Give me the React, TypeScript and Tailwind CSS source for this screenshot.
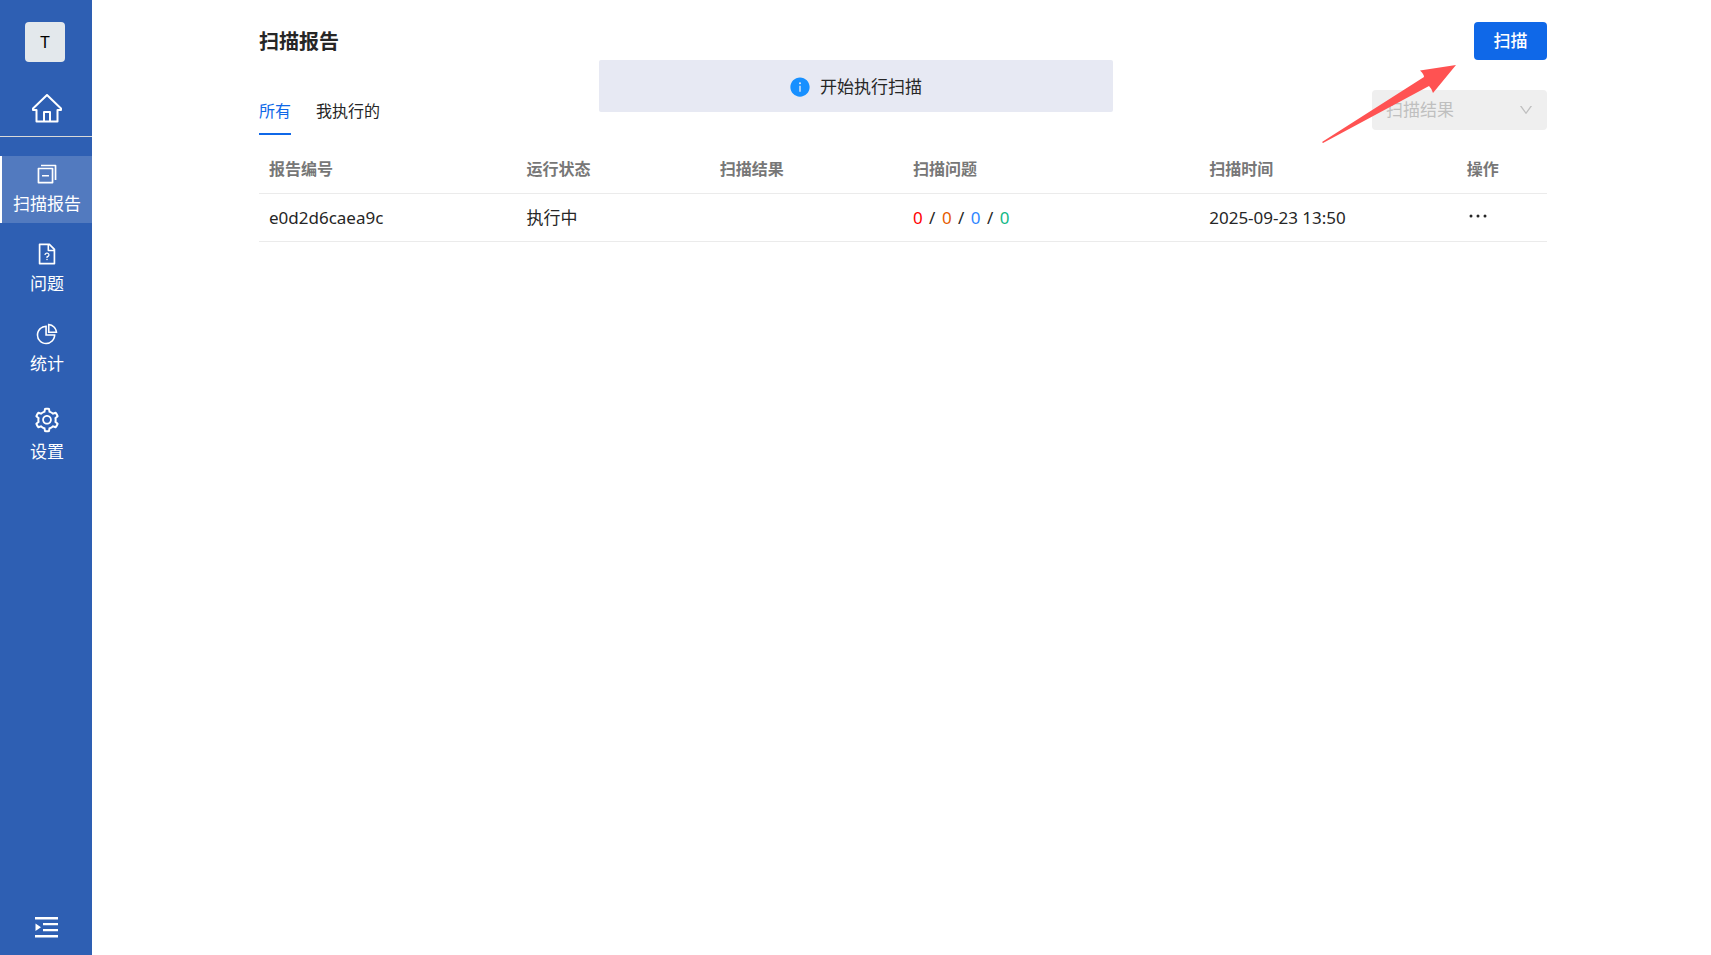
import { AiFillInfoCircle, AiOutlineDown, AiOutlineFileUnknown, AiOutlinePieChart, AiOutlineSetting, AiOutlineSwitcher } from "react-icons/ai";

const reports = [
  { id: "e0d2d6caea9c", status: "执行中", result: "", issues: [0, 0, 0, 0], time: "2025-09-23 13:50" },
];

const columns = [
  { label: "报告编号", width: "w-[20%]" },
  { label: "运行状态", width: "w-[15%]" },
  { label: "扫描结果", width: "w-[15%]" },
  { label: "扫描问题", width: "w-[23%]" },
  { label: "扫描时间", width: "w-[20%]" },
  { label: "操作", width: "w-[7%]" },
];

const issueColors = ["text-[#ff0000]", "text-[#e65c00]", "text-[#2f86ff]", "text-[#12b886]"];

function HomeIcon() {
  return (
    <svg viewBox="0 0 30 29" className="h-[29px] w-[30px]" fill="none" stroke="currentColor" strokeWidth="2" strokeLinejoin="round">
      <path d="M15 1 L29 14.5 V16 H25.5 V27.5 H4.5 V16 H1 V14.5 Z" />
      <path d="M12 27 V18 H18 V27" />
    </svg>
  );
}

function ExpandIcon() {
  return (
    <svg viewBox="0 0 23 21" className="h-[21px] w-[23px]" fill="currentColor">
      <path d="M0 0H23V2.4H0ZM8 6H23V8.2H8ZM8 12H23V14.2H8ZM0 18H23V20.4H0ZM0.5 6.5L6 10.2L0.5 14Z" />
    </svg>
  );
}

function Sidebar() {
  const link = "flex flex-col items-center gap-[6px] text-[17px] leading-6 text-white";
  return (
    <nav className="flex w-[92px] shrink-0 flex-col bg-[#2e5fb3]">
      <div className="flex flex-col items-center border-b border-[#d9d9d9] pt-[22px] pb-[13px]">
        <button className="mr-[2px] h-10 w-10 rounded bg-[#e3e8ec] text-[17px] text-black">T</button>
        <a href="#home" aria-label="首页" className="mt-8 ml-[2px] text-white">
          <HomeIcon />
        </a>
      </div>
      <a href="#reports" className={`${link} mt-[19px] h-[67px] border-l-2 border-white bg-[#527abf] pt-[6px]`}>
        <AiOutlineSwitcher size={24} />
        <span>扫描报告</span>
      </a>
      <a href="#issues" className={`${link} mt-[19px] pl-[2px]`}>
        <AiOutlineFileUnknown size={24} />
        <span>问题</span>
      </a>
      <a href="#stats" className={`${link} mt-[26px] pl-[2px]`}>
        <AiOutlinePieChart size={24} />
        <span>统计</span>
      </a>
      <a href="#settings" className={`${link} mt-[30px] pl-[2px]`}>
        <AiOutlineSetting size={28} />
        <span>设置</span>
      </a>
      <button aria-label="展开菜单" className="mx-auto mt-auto mb-[17px] text-white">
        <ExpandIcon />
      </button>
    </nav>
  );
}

export default function App() {
  return (
    <div className="relative flex min-h-screen bg-white font-['Noto_Sans','Noto_Sans_CJK_SC',sans-serif] text-[17px] text-[#262626]">
      <Sidebar />
      <main className="flex-1 pt-[22px] pr-[164px] pl-[167px]">
        <header className="flex items-center justify-between">
          <h1 className="pt-[2px] text-xl font-bold">扫描报告</h1>
          <button className="h-[38px] w-[73px] rounded bg-[#0f68e8] font-medium text-white">扫描</button>
        </header>
        <div className="mt-[30px] flex items-start justify-between">
          <div role="tablist" className="flex gap-[25px] text-base">
            <button role="tab" aria-selected="true" className="h-[45px] border-b-2 border-[#0f68e8] pb-[2px] text-[#0f68e8]">所有</button>
            <button role="tab" aria-selected="false" className="h-[45px] border-b-2 border-transparent pb-[2px]">我执行的</button>
          </div>
          <div className="relative flex w-[175px] items-center">
            <select aria-label="扫描结果" disabled className="h-10 w-full appearance-none rounded bg-[#efefef] pl-[14px] text-[#bfbfbf] opacity-100">
              <option>扫描结果</option>
            </select>
            <AiOutlineDown size={16} className="pointer-events-none absolute right-[13px] text-[#bfbfbf]" />
          </div>
        </div>
        <table className="mt-[10px] w-full table-fixed text-left">
          <thead>
            <tr className="h-12 border-b border-[#ebebeb] text-base text-[#777777]">
              {columns.map((c) => (
                <th key={c.label} className={`${c.width} pl-[10px] font-bold`}>{c.label}</th>
              ))}
            </tr>
          </thead>
          <tbody>
            {reports.map((r) => (
              <tr key={r.id} className="h-12 border-b border-[#ebebeb]">
                <td className="pt-[2px] pl-[10px]">{r.id}</td>
                <td className="pt-[2px] pl-[10px]">{r.status}</td>
                <td className="pt-[2px] pl-[10px]">{r.result}</td>
                <td className="pt-[2px] pl-[10px]">
                  {r.issues.map((n, i) => (
                    <span key={i}>
                      {i > 0 && <span className="mx-[2px]"> / </span>}
                      <span className={issueColors[i]}>{n}</span>
                    </span>
                  ))}
                </td>
                <td className="pt-[2px] pl-[10px]">{r.time}</td>
                <td className="pl-3">
                  <button aria-label="更多操作" className="flex pb-[2px]">
                    <svg viewBox="0 0 18 4" className="h-1 w-[18px]" fill="currentColor">
                      <circle cx="2" cy="2" r="1.5" />
                      <circle cx="9" cy="2" r="1.5" />
                      <circle cx="16" cy="2" r="1.5" />
                    </svg>
                  </button>
                </td>
              </tr>
            ))}
          </tbody>
        </table>
      </main>
      <div role="status" className="absolute top-[60px] left-1/2 flex h-[52px] w-[514px] -translate-x-1/2 items-center justify-center gap-[9px] rounded-xs bg-[#e7e9f3] pt-px">
        <AiFillInfoCircle size={22} className="text-[#1890ff]" />
        开始执行扫描
      </div>
      <svg viewBox="0 0 135 80" className="pointer-events-none absolute top-[64px] right-[254px] h-20 w-[135px]" fill="#ff5252">
        <path d="M0 78 L102 13 Q102 10 98 6.500 L134 1 L111 29 Q110 25 107 22 L1 79 Z" />
      </svg>
    </div>
  );
}
